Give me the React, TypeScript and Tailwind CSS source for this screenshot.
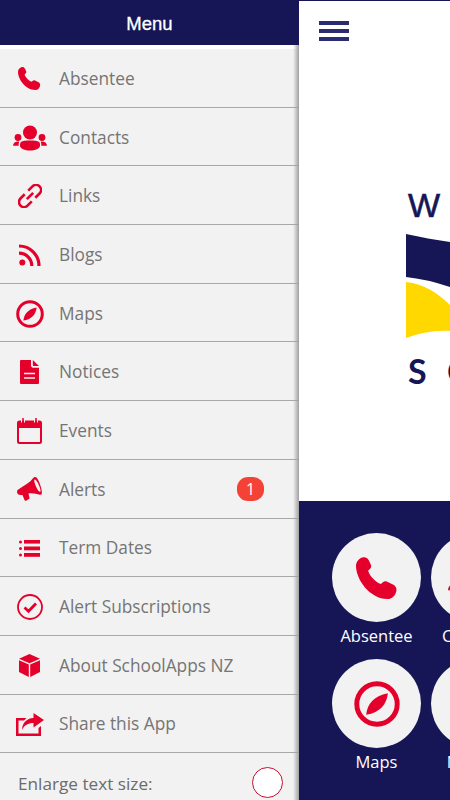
import type { ReactNode } from 'react';

const RED = '#e4002b';

type IconProps = { className?: string };

function PhoneIcon({ className }: IconProps) {
  return (
    <svg viewBox="0 0 24 24" className={className} fill={RED}>
      <path d="M3.5.3c1.500-.5 3 0 3.800 1.500l1.200 2.600c.4 1 .2 1.800-.6 2.500l-1 .9c1 3.200 4.400 6.500 7.300 7.600l1.200-1c.7-.6 1.500-.7 2.400-.3l3.600 1.800c1.400.8 2 2.300 1.600 3.800-.6 2.400-2.400 4.300-5 4.300C8 24 0 13 0 5 0 3 1.500 1 3.500.3z" />
    </svg>
  );
}

function ContactsIcon({ className }: IconProps) {
  return (
    <svg viewBox="0 0 34 26" className={className} fill={RED}>
      <circle cx="17" cy="7.500" r="7" />
      <circle cx="5" cy="12.500" r="3.400" />
      <circle cx="29" cy="12.500" r="3.400" />
      <path d="M8 17c2-1.300 4-1.500 9-1.500s7 .2 9 1.500c1.200.8 1 2.500 1 3.500 0 3.500-5 5-10 5s-10-1.500-10-5c0-1 0-2.700 1-3.500z" />
      <path d="M5.500 16.500c.6 0 .8.200.5 1-.4 1-.5 2-.3 3.200H0c.2-2.700 2-4.200 5.500-4.200zM28.500 16.500c-.6 0-.8.200-.5 1 .4 1 .5 2 .3 3.200H34c-.2-2.700-2-4.200-5.500-4.200z" />
    </svg>
  );
}

function LinkIcon({ className }: IconProps) {
  return (
    <svg viewBox="0 0 24 24" className={className} fill="none" stroke={RED} strokeWidth="2.600">
      <g transform="rotate(-45 12 12)">
        <path d="M9.500 7H3.500a5 5 0 0 0 0 10h6" />
        <path d="M14.500 7h6a5 5 0 0 1 0 10h-6" />
        <path d="M7.500 12h9" />
      </g>
    </svg>
  );
}

function RssIcon({ className }: IconProps) {
  return (
    <svg viewBox="0 0 22 22" className={className} fill="none" stroke={RED} strokeWidth="3.200">
      <circle cx="3.300" cy="18.500" r="3" fill={RED} stroke="none" />
      <path d="M0 9.200a12.800 12.800 0 0 1 12.800 12.800" />
      <path d="M0 2a20 20 0 0 1 20 20" />
    </svg>
  );
}

function CompassIcon({ className }: IconProps) {
  return (
    <svg viewBox="0 0 28 28" className={className} fill={RED}>
      <circle cx="14" cy="14" r="12.300" fill="none" stroke={RED} strokeWidth="3" />
      <path d="M7.400 20.600C8 14 12 9 20.600 7.400 20 14 16 19 7.400 20.600z" />
    </svg>
  );
}

function NoticeIcon({ className }: IconProps) {
  return (
    <svg viewBox="0 0 19 24" className={className}>
      <path fill={RED} d="M1 0h10v5.500c0 1.400.8 2.200 2.200 2.200H19V23a1 1 0 0 1-1 1H1a1 1 0 0 1-1-1V1a1 1 0 0 1 1-1z" />
      <path fill={RED} d="M12.800 0L19 6h-5c-.8 0-1.200-.4-1.200-1.200z" />
      <path stroke="#f2f2f2" strokeWidth="1.600" d="M4 13.500h11M4 18h11" />
    </svg>
  );
}

function CalendarIcon({ className }: IconProps) {
  return (
    <svg viewBox="0 0 25 26" className={className}>
      <rect x="1" y="3.500" width="23" height="21.500" rx="1.500" fill="none" stroke={RED} strokeWidth="2" />
      <path fill={RED} d="M1 3.500h23V10H1z" />
      <path stroke="#f2f2f2" strokeWidth="1" d="M4.500 1v3.500M7.500 1v3.500M17.500 1v3.500M20.500 1v3.500" />
      <path stroke={RED} strokeWidth="1.500" d="M6 0v4M19 0v4" />
    </svg>
  );
}

function MegaphoneIcon({ className }: IconProps) {
  return (
    <svg viewBox="0 0 25 25" className={className} fill={RED}>
      <path fillRule="evenodd" d="M18 0c1.600 0 3 2 4.300 5.500 1.500 3.600 2.900 8.500 2.500 11-.2 1-1 1.400-2 1.200-3-.6-6.500-1.700-11.300-1.200l1 4.200c.2.900-.3 1.300-1 1.600l-2.500 1.500c-.7.300-1.200 0-1.500-.7l-2-5C2.800 18 1 17.700.4 16.200c-.8-1.800-.3-3 1.300-4C8 8 13 5.500 16 1.300 16.600.5 17.200 0 18 0zm-.3 2.600c-.8 0-.6 2.200.9 6s3.500 6.600 4.500 6.200c.9-.4.300-3-1.100-6.300-1.400-3.500-3-5.900-4.300-5.900z" />
    </svg>
  );
}

function ListIcon({ className }: IconProps) {
  return (
    <svg viewBox="0 0 21 17" className={className} fill={RED}>
      <rect x="0" y="0.500" width="3" height="3" rx="1.500" />
      <rect x="0" y="7" width="3" height="3" rx="1.500" />
      <rect x="0" y="13.500" width="3" height="3" rx="1.500" />
      <rect x="5" y="0" width="16" height="3.600" />
      <rect x="5" y="6.500" width="16" height="3.800" />
      <rect x="5" y="13" width="16" height="3.800" />
    </svg>
  );
}

function CheckCircleIcon({ className }: IconProps) {
  return (
    <svg viewBox="0 0 26 26" className={className} fill="none" stroke={RED}>
      <circle cx="13" cy="13" r="12" strokeWidth="1.800" />
      <path d="M7.500 13.500l4 3.700 7.500-7.700" strokeWidth="2.800" />
    </svg>
  );
}

function CubeIcon({ className }: IconProps) {
  return (
    <svg viewBox="0 0 21 23" className={className} fill={RED}>
      <path d="M10.500 0L21 4.700l-10.500 4.600L0 4.700z" />
      <path d="M0 6.300l9.800 4.300V23L0 18z" />
      <path d="M21 6.300l-9.800 4.300V23L21 18z" />
    </svg>
  );
}

function ShareIcon({ className }: IconProps) {
  return (
    <svg viewBox="0 0 28 23" className={className} fill={RED}>
      <path d="M0 5h10.500L8 7.500H2.500v13h20V15l2.500-2v10H0z" />
      <path d="M17.500 0L28 7l-10.500 7.500V10C12 10 8.500 12 6 17c.2-7 4.500-11.500 11.500-12z" />
    </svg>
  );
}

const menuItems: { label: string; icon: ReactNode; badge?: string }[] = [
  { label: 'Absentee', icon: <PhoneIcon className="w-[23px] h-[23px]" /> },
  { label: 'Contacts', icon: <ContactsIcon className="w-[34px] h-[26px]" /> },
  { label: 'Links', icon: <LinkIcon className="w-[24px] h-[24px]" /> },
  { label: 'Blogs', icon: <RssIcon className="w-[22px] h-[22px]" /> },
  { label: 'Maps', icon: <CompassIcon className="w-[28px] h-[28px]" /> },
  { label: 'Notices', icon: <NoticeIcon className="w-[19px] h-[24px]" /> },
  { label: 'Events', icon: <CalendarIcon className="w-[25px] h-[26px]" /> },
  { label: 'Alerts', icon: <MegaphoneIcon className="w-[25px] h-[25px]" />, badge: '1' },
  { label: 'Term Dates', icon: <ListIcon className="w-[21px] h-[17px]" /> },
  { label: 'Alert Subscriptions', icon: <CheckCircleIcon className="w-[26px] h-[26px]" /> },
  { label: 'About SchoolApps NZ', icon: <CubeIcon className="w-[21px] h-[23px]" /> },
  { label: 'Share this App', icon: <ShareIcon className="w-[28px] h-[23px]" /> },
];

const tiles: { label: string; icon: ReactNode }[][] = [
  [
    { label: 'Absentee', icon: <PhoneIcon className="w-[42px] h-[42px]" /> },
    { label: 'Contacts', icon: <ContactsIcon className="w-[56px] h-[43px]" /> },
  ],
  [
    { label: 'Maps', icon: <CompassIcon className="w-[46px] h-[46px]" /> },
    { label: 'Notices', icon: <NoticeIcon className="w-[32px] h-[40px]" /> },
  ],
];

export default function App() {
  return (
    <div className="flex w-[450px] h-[800px] overflow-hidden bg-[#161656] font-['Open_Sans',sans-serif]">
      <aside className="relative w-[299px] shrink-0 bg-[#f2f2f2] overflow-hidden">
        <div className="flex items-center justify-center h-[45px] pt-[3px] bg-[#161656] text-white text-[18.5px] font-['Liberation_Sans',sans-serif] [-webkit-text-stroke:0.3px_white]">
          Menu
        </div>
        <div className="h-[4px] bg-white" />
        {menuItems.map((item) => (
          <div key={item.label} className="flex items-center h-[58.7px] border-b border-[#a8a8a8]">
            <div className="flex justify-center w-[59px] pt-[2px] shrink-0">{item.icon}</div>
            <span className="pt-[2px] text-[17.3px] text-[#757575]">{item.label}</span>
            {item.badge && (
              <span className="ml-auto mr-[35px] flex items-center justify-center w-[27px] h-[24px] rounded-[11px] bg-[#f44336] text-white text-[16px]">
                {item.badge}
              </span>
            )}
          </div>
        ))}
        <div className="flex items-center justify-between pl-[18px] pr-[16px] pt-[14px]">
          <span className="pt-[2px] text-[17.2px] text-[#6b6b6b]">Enlarge text size:</span>
          <span className="w-[31px] h-[31px] rounded-full bg-white border border-[#c8102e]" />
        </div>
        <div className="absolute top-[45px] right-0 bottom-0 w-[6px] bg-gradient-to-r from-transparent to-[#a0a0a0]" />
      </aside>

      <main className="flex-1 min-w-0 overflow-hidden">
        <section className="h-[501px] bg-white border-t border-[#161656]">
          <div className="flex flex-col gap-[4px] w-[30px] ml-[20px] pt-[20px]">
            <span className="h-[4px] bg-[#2b2b70]" />
            <span className="h-[4px] bg-[#2b2b70]" />
            <span className="h-[4px] bg-[#2b2b70]" />
          </div>
          <div className="ml-[107px] mt-[149px] w-[44px]">
            <div className="h-[30px] pl-[2px] text-[34px] leading-[30px] text-[#161656] font-['Liberation_Sans',sans-serif] [-webkit-text-stroke:0.6px_#161656]">W</div>
            <svg viewBox="0 0 44 105" className="w-[44px] h-[105px] mt-[14px]">
              <path fill="#161656" d="M0 0c15 3 29 6 44 8v45Q20 45 0 43z" />
              <path fill="#ffd800" d="M0 48c18 2 32 11 44 23v26c-15-1-30 2-44 7z" />
            </svg>
            <div className="flex mt-[17px] h-[30px] pl-[2px] text-[34px] leading-[30px] font-bold text-[#161656] font-['Lato',sans-serif]">
              <span className="w-[39px] shrink-0">S</span>
              <span>C</span>
            </div>
          </div>
        </section>
        <section className="flex flex-col gap-[9px] pt-[32px] pl-[33px]">
          {tiles.map((row, i) => (
            <div key={i} className="flex gap-[10px]">
              {row.map((tile) => (
                <div key={tile.label} className="flex flex-col items-center w-[89px] shrink-0">
                  <div className="flex items-center justify-center w-[89px] h-[89px] rounded-full bg-[#f2f2f2]">
                    {tile.icon}
                  </div>
                  <span className="text-[16.5px] leading-[28px] text-white whitespace-nowrap">{tile.label}</span>
                </div>
              ))}
            </div>
          ))}
        </section>
      </main>
    </div>
  );
}
